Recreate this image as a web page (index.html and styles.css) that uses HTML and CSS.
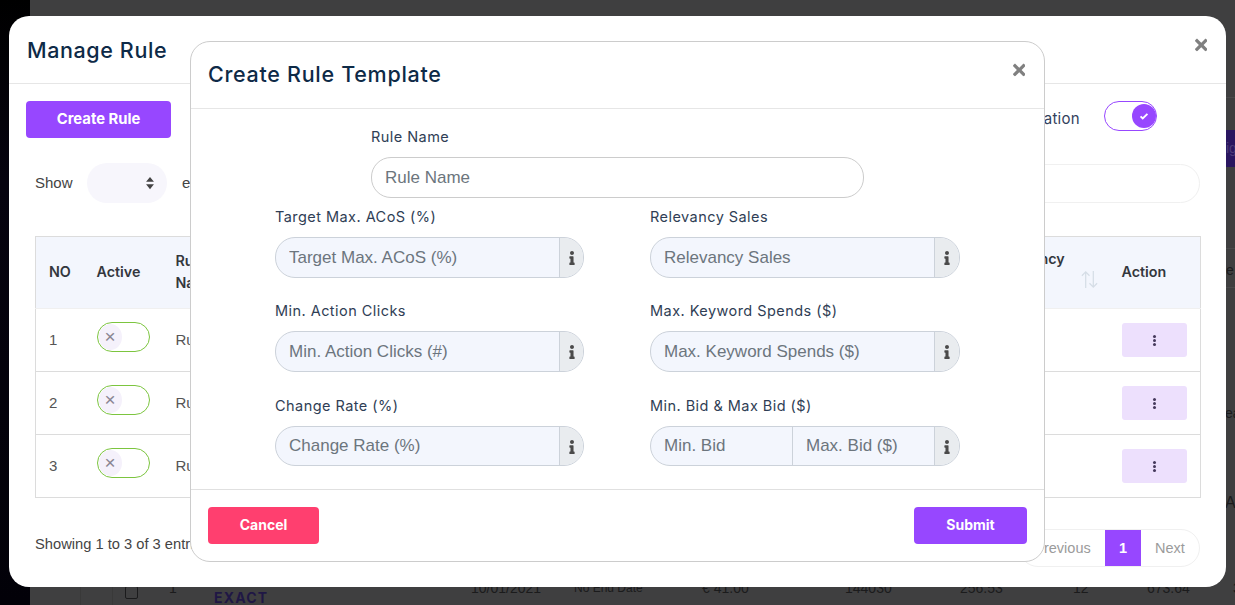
FILE: index.html
```html
<!DOCTYPE html>
<html lang="en">
<head>
<meta charset="utf-8">
<title>Manage Rule</title>
<link rel="stylesheet" href="styles.css">
</head>
<body>
<svg class="defs" width="0" height="0" aria-hidden="true">
  <symbol id="i-times" viewBox="0 0 352 512"><path d="M242.72 256l100.07-100.07c12.28-12.28 12.28-32.19 0-44.48l-22.24-22.24c-12.28-12.28-32.19-12.28-44.48 0L176 189.28 75.93 89.21c-12.28-12.28-32.19-12.28-44.48 0L9.21 111.45c-12.28 12.28-12.28 32.19 0 44.48L109.28 256 9.21 356.07c-12.28 12.28-12.28 32.19 0 44.48l22.24 22.24c12.28 12.28 32.2 12.28 44.48 0L176 322.72l100.07 100.07c12.28 12.28 32.2 12.28 44.48 0l22.24-22.24c12.28-12.28 12.28-32.19 0-44.48L242.72 256z"/></symbol>
  <symbol id="i-info" viewBox="0 0 192 512"><path d="M20 424.229h20V279.771H20c-11.046 0-20-8.954-20-20V212c0-11.046 8.954-20 20-20h112c11.046 0 20 8.954 20 20v212.229h20c11.046 0 20 8.954 20 20V492c0 11.046-8.954 20-20 20H20c-11.046 0-20-8.954-20-20v-47.771c0-11.046 8.954-20 20-20zM96 0C56.235 0 24 32.235 24 72s32.235 72 72 72 72-32.235 72-72S135.764 0 96 0z"/></symbol>
</svg>

<div class="page">
  <div class="side"></div>
  <div class="behind">
    <div class="behind-row">
      <span class="band"></span>
      <span class="check"></span>
      <span class="cell c0">1</span>
      <span class="exact">EXACT</span>
      <span class="cell c1">10/01/2021</span>
      <span class="cell c2">No End Date</span>
      <span class="cell c3">€ 41.00</span>
      <span class="cell c4">144030</span>
      <span class="cell c5">256.53</span>
      <span class="cell c6">12</span>
      <span class="cell c7">673.64</span>
    </div>
  </div>
  <div class="strip">
    <span class="strip-line l1"></span>
    <span class="strip-btn">ign</span>
    <span class="strip-line l2"></span>
    <span class="strip-e">e</span>
    <span class="strip-line l3"></span>
    <span class="strip-ea">ea</span>
    <span class="strip-a">A</span>
    <span class="strip-3">3</span>
  </div>
</div>

<section class="modal outer">
  <header class="modal-head outer-head">
    <h2 class="title">Manage Rule</h2>
    <svg class="close"><use href="#i-times"/></svg>
  </header>
  <div class="outer-body">
    <div class="toolbar">
      <button class="btn btn-primary btn-create">Create Rule</button>
      <div class="automation">
        <span>Automation</span>
        <span class="switch-on">
          <span class="knob-on">
            <svg viewBox="0 0 16 16" width="10" height="10"><path d="M2.5 8.5l3.5 3.5 7.5-7.5" fill="none" stroke="#fff" stroke-width="3"/></svg>
          </span>
        </span>
      </div>
    </div>
    <div class="filters">
      <span class="show">Show</span>
      <span class="select">
        <svg viewBox="0 0 10 16" width="10" height="14"><path d="M5 1l4.5 5.5h-9zM5 15L.5 9.500h9z" fill="#444"/></svg>
      </span>
      <span class="entries">entries</span>
      <span class="search"></span>
    </div>
    <table class="rules">
      <colgroup>
        <col class="col-no"><col class="col-active"><col class="col-name"><col class="col-rel"><col class="col-action">
      </colgroup>
      <thead>
        <tr>
          <th>NO</th>
          <th>Active</th>
          <th>Rule<br>Name</th>
          <th class="th-rel">Relevancy<span class="sort"><svg viewBox="0 0 20 20" width="19" height="19"><path d="M6 19V2M2 6l4-4 4 4M14 1v17M10 14l4 4 4-4" fill="none" stroke="#d5dde6" stroke-width="1.300"/></svg></span></th>
          <th>Action</th>
        </tr>
      </thead>
      <tbody>
        <tr>
          <td class="txt">1</td>
          <td><span class="switch-off"><span class="knob-off">×</span></span></td>
          <td class="txt">Rule 1</td><td></td>
          <td><button class="more"><span class="dots"></span></button></td>
        </tr>
        <tr>
          <td class="txt">2</td>
          <td><span class="switch-off"><span class="knob-off">×</span></span></td>
          <td class="txt">Rule 2</td><td></td>
          <td><button class="more"><span class="dots"></span></button></td>
        </tr>
        <tr>
          <td class="txt">3</td>
          <td><span class="switch-off"><span class="knob-off">×</span></span></td>
          <td class="txt">Rule 3</td><td></td>
          <td><button class="more"><span class="dots"></span></button></td>
        </tr>
      </tbody>
    </table>
    <div class="table-foot">
      <span class="showing">Showing 1 to 3 of 3 entries</span>
      <div class="pager">
        <span class="pg pg-prev">Previous</span>
        <span class="pg pg-cur">1</span>
        <span class="pg pg-next">Next</span>
      </div>
    </div>
  </div>
</section>

<section class="modal inner">
  <header class="modal-head inner-head">
    <h2 class="title">Create Rule Template</h2>
    <svg class="close"><use href="#i-times"/></svg>
  </header>
  <form class="form">
    <div class="field field-name">
      <label>Rule Name</label>
      <input class="plain" placeholder="Rule Name">
    </div>
    <div class="grid">
      <div class="field">
        <label>Target Max. ACoS (%)</label>
        <div class="group"><input placeholder="Target Max. ACoS (%)"><span class="addon"><svg class="info"><use href="#i-info"/></svg></span></div>
      </div>
      <div class="field">
        <label>Relevancy Sales</label>
        <div class="group"><input placeholder="Relevancy Sales"><span class="addon"><svg class="info"><use href="#i-info"/></svg></span></div>
      </div>
      <div class="field">
        <label>Min. Action Clicks</label>
        <div class="group"><input placeholder="Min. Action Clicks (#)"><span class="addon"><svg class="info"><use href="#i-info"/></svg></span></div>
      </div>
      <div class="field">
        <label>Max. Keyword Spends ($)</label>
        <div class="group"><input placeholder="Max. Keyword Spends ($)"><span class="addon"><svg class="info"><use href="#i-info"/></svg></span></div>
      </div>
      <div class="field field-last">
        <label>Change Rate (%)</label>
        <div class="group"><input placeholder="Change Rate (%)"><span class="addon"><svg class="info"><use href="#i-info"/></svg></span></div>
      </div>
      <div class="field field-last">
        <label>Min. Bid &amp; Max Bid ($)</label>
        <div class="group"><input class="half" placeholder="Min. Bid"><input class="half half-r" placeholder="Max. Bid ($)"><span class="addon"><svg class="info"><use href="#i-info"/></svg></span></div>
      </div>
    </div>
  </form>
  <footer class="inner-foot">
    <button class="btn btn-cancel">Cancel</button>
    <button class="btn btn-primary btn-submit">Submit</button>
  </footer>
</section>
</body>
</html>
```
FILE: styles.css
```css
* { box-sizing: border-box; }
html, body { margin: 0; height: 605px; overflow: hidden; }
body { font-family: "Liberation Sans", Arial, sans-serif; background: #3f3f40; color: #333; }
.defs { position: absolute; }

/* dimmed page behind the dialogs */
.page { display: flex; height: 605px; }
.side { width: 30px; background: linear-gradient(180deg, #000 0, #06030f 30%, #020108 100%); }
.behind { flex: 1; display: flex; flex-direction: column; justify-content: flex-end; }
.behind-row { position: relative; height: 20px; color: #1b1b1c; font-size: 14px; line-height: 20px; }
.band { position: absolute; left: 50px; top: 0; width: 33px; height: 20px; border-left: 1px solid #393939; border-right: 1px solid #393939; }
.check { position: absolute; left: 95px; top: 1px; width: 13px; height: 13px; border: 1px solid #1b1b1c; border-radius: 2px; }
.exact { position: absolute; left: 184px; top: 3px; font: 700 14px/20px "Inter", sans-serif; letter-spacing: 1.2px; color: #1f1745; }
.cell { position: absolute; top: -7px; }
.c0 { left: 139px; } .c1 { left: 441px; } .c2 { left: 544px; font-size: 12px; } .c3 { left: 672px; } .c4 { left: 815px; }
.c5 { left: 930px; } .c6 { left: 1043px; } .c7 { left: 1117px; }
.strip { position: absolute; left: 1226px; top: 0; width: 9px; height: 605px; overflow: hidden; color: #1b1b1c; font-size: 14px; }
.strip-line { position: absolute; left: 0; width: 9px; height: 1px; background: #4a4a4b; }
.l1 { top: 97px; } .l2 { top: 248px; } .l3 { top: 287px; }
.strip-btn { position: absolute; left: 0; top: 130px; width: 9px; height: 37px; background: #2a1660; color: #4d3d78; line-height: 37px; overflow: hidden; }
.strip-e { position: absolute; top: 262px; }
.strip-ea { position: absolute; top: 405px; left: -1px; }
.strip-a { position: absolute; top: 494px; left: -1px; font-size: 16px; }
.strip-3 { position: absolute; top: 580px; left: 7px; }

/* dialogs */
.modal { position: absolute; background: #fff; }
.outer { left: 9px; top: 16px; width: 1217px; height: 571px; border-radius: 20px; }
.inner { left: 190px; top: 41px; width: 855px; height: 521px; border: 1px solid #ccc; border-radius: 20px; display: flex; flex-direction: column; }
.modal-head { display: flex; align-items: center; justify-content: space-between; border-bottom: 1px solid #e6e6e6; }
.outer-head { height: 68px; padding: 0 19px 0 18px; }
.inner-head { height: 67px; padding: 0 19px 0 17px; }
.title { margin: 0; font: 500 21.500px/1 "Inter", sans-serif; color: #0e2a47; letter-spacing: .7px; }
.outer .title { margin-top: 2px; letter-spacing: .6px; }
.close { width: 12.500px; height: 18px; fill: #808080; }
.outer .close { margin-top: -10px; }
.inner .close { margin-top: -10px; }

/* outer body */
.outer-body { padding: 17px 26px 0 26px; }
.toolbar { display: flex; justify-content: space-between; align-items: flex-start; margin-left: -9px; margin-right: 43px; }
.btn { border: 0; border-radius: 4px; color: #fff; font: 700 14px/1 "Inter", sans-serif; height: 37px; padding: 0 0 2px; }
.btn-primary { background: #9747ff; }
.btn-create { width: 145px; font-size: 14.800px; padding-bottom: 1px; }
.btn-cancel { width: 111px; background: #ff3f6f; }
.btn-submit { width: 113px; }
.automation { display: flex; align-items: flex-start; gap: 24px; font: 400 15px/35px "Inter", sans-serif; color: #33415c; letter-spacing: .3px; }
.switch-on { display: flex; align-items: center; justify-content: flex-end; width: 53px; height: 30px; border: 1px solid #9747ff; border-radius: 15px; background: #fff; }
.knob-on { display: flex; align-items: center; justify-content: center; width: 24px; height: 24px; border-radius: 50%; background: #9747ff; }
.filters { display: flex; align-items: center; height: 40px; margin-top: 25px; font-size: 15px; color: #444; }
.show { width: 52px; margin-top: -2px; }
.select { display: flex; align-items: center; justify-content: flex-end; width: 80px; height: 40px; padding-right: 12px; background: #f7f6fc; border-radius: 20px; }
.entries { margin-left: 15px; margin-top: -2px; }
.search { margin-left: auto; width: 800px; height: 39px; border: 1px solid #f0f0f0; border-radius: 20px; }

/* table */
.rules { width: 1165px; margin-top: 33px; border-collapse: collapse; table-layout: fixed; border: 1px solid #dcdcdc; font-size: 15px; color: #555; }
.col-no { width: 49px; } .col-active { width: 79px; } .col-name { width: 818px; } .col-rel { width: 128px; } .col-action { width: 91px; }
.rules th { height: 72px; padding: 0 12px 2px; background: #f3f6fd; text-align: left; font: 600 14.300px/22px "Inter", sans-serif; color: #33373d; border-bottom: 1px solid #f0f0f0; }
.rules th:first-child, .rules td:first-child { padding-left: 13px; }
.rules td { height: 63px; padding: 0 12px; border-bottom: 1px solid #dcdcdc; vertical-align: middle; }
.rules .txt { padding-bottom: 2px; }
.sort { display: block; text-align: right; margin-right: -1px; line-height: 22px; }
.switch-off { display: block; width: 53px; height: 30px; margin-top: -7px; border: 1px solid #7cc53f; border-radius: 15px; padding: 1px; }
.knob-off { display: block; width: 23px; height: 26px; border-radius: 50%; background: #f5f1fb; color: #8a8592; font-size: 19px; line-height: 26px; text-align: center; }
.more { display: flex; align-items: center; justify-content: center; width: 65px; height: 34px; border: 0; border-radius: 3px; background: #ede0fd; }
.dots { width: 3px; height: 3px; border-radius: 50%; background: #45395c; box-shadow: 0 -4px 0 #45395c, 0 4px 0 #45395c; }
.table-foot { display: flex; align-items: flex-start; justify-content: space-between; margin-top: 31px; }
.showing { font-size: 14.700px; line-height: 30px; color: #444; }
.pager { display: flex; height: 38px; border: 1px solid #f0f0f0; border-radius: 20px; font-size: 14.500px; color: #9b9b9b; overflow: hidden; }
.pg { display: flex; align-items: center; justify-content: center; }
.pg-prev { width: 85px; }
.pg-cur { width: 36px; background: #9747ff; color: #fff; font-weight: 700; }
.pg-next { width: 58px; }

/* form */
.form { flex: 1; padding: 19px 84px 0; }
.field label { display: block; margin-bottom: 11px; font: 400 14.500px/18px "Inter", sans-serif; color: #2f3e55; letter-spacing: .45px; }
.field-name { width: 493px; margin: 0 auto 10px; }
input { font: 400 17px/1 "Liberation Sans", Arial, sans-serif; color: #333; outline: 0; }
input::placeholder { color: #6c757d; opacity: 1; }
.plain { display: block; width: 100%; height: 41px; padding: 0 13px; border: 1px solid #ccc; border-radius: 20px; background: #fff; }
.grid { display: grid; grid-template-columns: 309px 310px; column-gap: 66px; row-gap: 24px; }
.group { display: flex; height: 41px; border: 1px solid #ccd2da; border-radius: 20px; overflow: hidden; background: #f3f6fd; }
.field-last { margin-top: 1px; }
.field-last .group { height: 40px; }
.group input { flex: 1; min-width: 0; width: 100%; padding: 0 13px; border: 0; background: transparent; }
.group .half-r { border-left: 1px solid #ccd2da; }
.addon { display: flex; flex: none; align-items: center; justify-content: center; width: 24px; border-left: 1px solid #ccd2da; background: #e9ecef; }
.field:nth-child(even) .addon { width: 25px; }
.info { width: 6px; height: 14px; fill: #4a4a4a; margin-top: 1px; }
.inner-foot { display: flex; justify-content: space-between; flex: none; height: 72px; padding: 17px 17px 0; border-top: 1px solid #e0e0e0; }
```
